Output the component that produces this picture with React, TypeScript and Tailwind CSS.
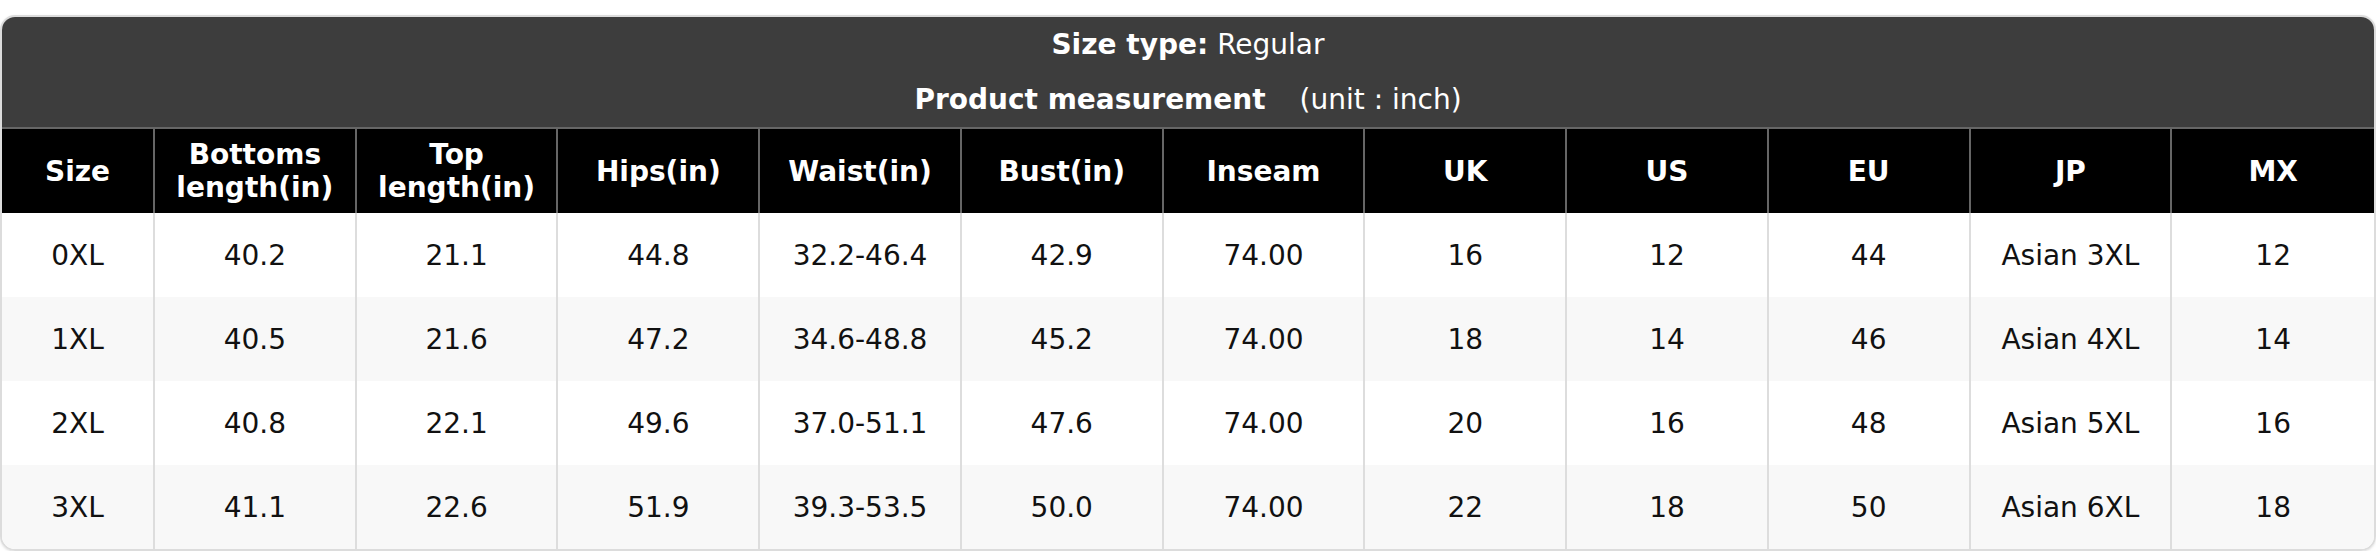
const headers = [
  "Size",
  "Bottoms length(in)",
  "Top length(in)",
  "Hips(in)",
  "Waist(in)",
  "Bust(in)",
  "Inseam",
  "UK",
  "US",
  "EU",
  "JP",
  "MX",
];

const rows = [
  ["0XL", "40.2", "21.1", "44.8", "32.2-46.4", "42.9", "74.00", "16", "12", "44", "Asian 3XL", "12"],
  ["1XL", "40.5", "21.6", "47.2", "34.6-48.8", "45.2", "74.00", "18", "14", "46", "Asian 4XL", "14"],
  ["2XL", "40.8", "22.1", "49.6", "37.0-51.1", "47.6", "74.00", "20", "16", "48", "Asian 5XL", "16"],
  ["3XL", "41.1", "22.6", "51.9", "39.3-53.5", "50.0", "74.00", "22", "18", "50", "Asian 6XL", "18"],
];

const SizeChart = () => {
  return (
    <div className="bg-white pt-[15px] font-['DejaVu_Sans',sans-serif] text-[28px] leading-[33px]">
      <div className="overflow-hidden rounded-[15px] border-2 border-[#dcdcdc] shadow-sm">
        <div className="bg-[#3d3d3d] text-white">
          <div className="flex h-[55px] items-center justify-center">
            <span className="font-bold">Size type:</span>
            <span className="ml-[9px]">Regular</span>
          </div>
          <div className="flex h-[55px] items-center justify-center">
            <span className="font-bold">Product measurement</span>
            <span className="ml-[34px]">(unit : inch)</span>
          </div>
        </div>
        <div className="grid grid-cols-[153px_repeat(11,minmax(0,1fr))] border-t-2 border-[#666] bg-black text-white">
          {headers.map((h, i) => (
            <div
              key={h}
              className={
                i < headers.length - 1
                  ? "flex h-[84px] items-center justify-center border-r-2 border-[#666] px-2 text-center font-bold"
                  : "flex h-[84px] items-center justify-center px-2 text-center font-bold"
              }
            >
              {h}
            </div>
          ))}
        </div>
        {rows.map((row, r) => (
          <div
            key={row[0]}
            className={
              r % 2 === 0
                ? "grid grid-cols-[153px_repeat(11,minmax(0,1fr))] bg-white text-[#111]"
                : "grid grid-cols-[153px_repeat(11,minmax(0,1fr))] bg-[#f8f8f8] text-[#111]"
            }
          >
            {row.map((cell, i) => (
              <div
                key={i}
                className={
                  i < row.length - 1
                    ? "flex h-[84px] items-center justify-center border-r-2 border-[#dddddd]"
                    : "flex h-[84px] items-center justify-center"
                }
              >
                {cell}
              </div>
            ))}
          </div>
        ))}
      </div>
    </div>
  );
};

export default function App() {
  return <SizeChart />;
}
